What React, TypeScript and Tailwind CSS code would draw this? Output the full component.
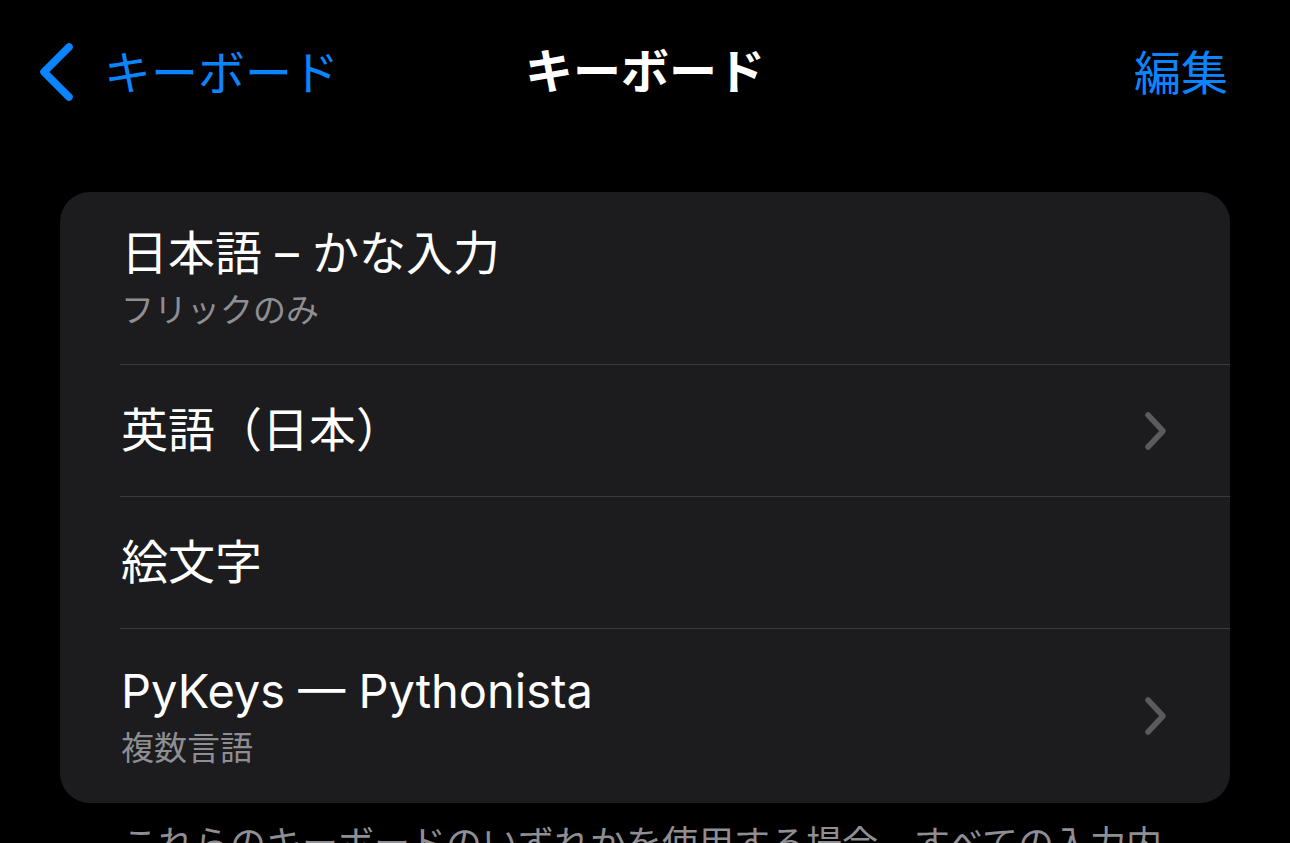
import React from 'react';

const FONT = { fontFamily: '"Inter", "Noto Sans CJK JP", sans-serif' };

const Chevron = () => (
  <svg width="26" height="40" viewBox="0 0 26 40" fill="none" className="shrink-0">
    <path d="M5 4 L20 20 L5 36" stroke="#5b5b5f" strokeWidth="5.5" strokeLinecap="round" strokeLinejoin="round" />
  </svg>
);

type Row = { title: string; subtitle?: string; chevron?: boolean; height: string };

const rows: Row[] = [
  { title: '日本語 – かな入力', subtitle: 'フリックのみ', height: 'h-[173px]' },
  { title: '英語（日本）', chevron: true, height: 'h-[132px]' },
  { title: '絵文字', height: 'h-[132px]' },
  { title: 'PyKeys — Pythonista', subtitle: '複数言語', chevron: true, height: 'h-[174px]' },
];

export default function App() {
  return (
    <div className="w-full h-[843px] overflow-hidden bg-black text-white" style={FONT}>
      {/* Nav bar */}
      <div className="grid grid-cols-[1fr_auto_1fr] items-center h-[144px]">
        <div className="flex items-center pl-[38px] gap-[28px] text-[#0a84ff]">
          <svg width="38" height="60" viewBox="0 0 38 60" fill="none">
            <path d="M31 5 L6 30 L31 55" stroke="#0a84ff" strokeWidth="7.5" strokeLinecap="round" strokeLinejoin="round" />
          </svg>
          <span className="text-[47px] leading-none">キーボード</span>
        </div>
        <div className="text-[48px] font-bold leading-none">キーボード</div>
        <div className="flex justify-end pr-[62px] text-[47px] leading-none text-[#0a84ff]">編集</div>
      </div>

      {/* Keyboards list */}
      <div className="mt-[48px] mx-[60px] rounded-[30px] bg-[#1c1c1e] overflow-hidden">
        {rows.map((row, i) => (
          <div
            key={row.title}
            className={`ml-[60px] pl-[1px] pr-[61px] flex items-center justify-between ${row.height} ${
              i < rows.length - 1 ? 'border-b border-[#3a3a3c]' : ''
            }`}
          >
            <div className="flex flex-col gap-[10px]">
              <span className="text-[47px] leading-[1.2]">{row.title}</span>
              {row.subtitle && <span className="text-[33px] leading-[1.2] text-[#8e8e93]">{row.subtitle}</span>}
            </div>
            {row.chevron && <Chevron />}
          </div>
        ))}
      </div>

      {/* Footer note */}
      <p className="mt-[18px] mx-[60px] pl-[62px] pr-[56px] text-[36px] leading-[1.3] text-[#8e8e93]">
        これらのキーボードのいずれかを使用する場合、すべての入力内容がキーボードの開発元に送信される可能性があります。
      </p>
    </div>
  );
}
